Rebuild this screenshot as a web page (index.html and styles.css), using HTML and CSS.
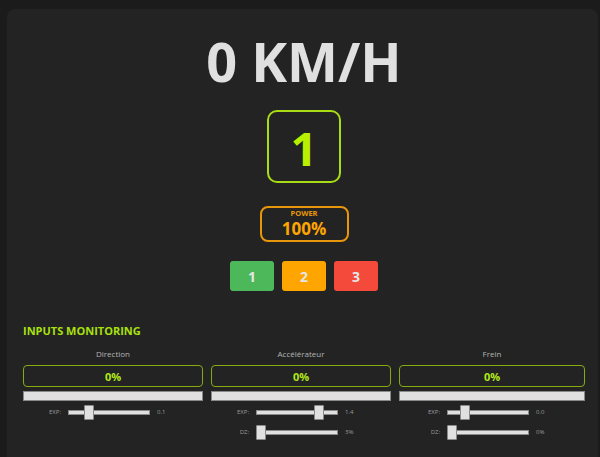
FILE: index.html
```html
<!DOCTYPE html>
<html lang="fr">
<head>
<meta charset="utf-8">
<title>Dashboard</title>
<link rel="stylesheet" href="styles.css">
</head>
<body>
<div class="panel">
  <div class="speed">0 KM/H</div>
  <div class="gear">1</div>
  <div class="power">
    <div class="power-label">POWER</div>
    <div class="power-value">100%</div>
  </div>
  <div class="modes">
    <div class="mode mode-green">1</div>
    <div class="mode mode-orange">2</div>
    <div class="mode mode-red">3</div>
  </div>
  <div class="section-title">INPUTS MONITORING</div>
  <div class="inputs">
    <div class="input">
      <div class="input-name">Direction</div>
      <div class="input-value">0%</div>
      <div class="input-bar"></div>
      <div class="slider-row">
        <span class="s-label">EXP:</span>
        <div class="track"><div class="thumb" style="left:20%"></div></div>
        <span class="s-value">0.1</span>
      </div>
    </div>
    <div class="input">
      <div class="input-name">Accélérateur</div>
      <div class="input-value">0%</div>
      <div class="input-bar"></div>
      <div class="slider-row">
        <span class="s-label">EXP:</span>
        <div class="track"><div class="thumb" style="left:72%"></div></div>
        <span class="s-value">1.4</span>
      </div>
      <div class="slider-row">
        <span class="s-label">DZ:</span>
        <div class="track"><div class="thumb" style="left:0%"></div></div>
        <span class="s-value">3%</span>
      </div>
    </div>
    <div class="input">
      <div class="input-name">Frein</div>
      <div class="input-value">0%</div>
      <div class="input-bar"></div>
      <div class="slider-row">
        <span class="s-label">EXP:</span>
        <div class="track"><div class="thumb" style="left:16%"></div></div>
        <span class="s-value">0.0</span>
      </div>
      <div class="slider-row">
        <span class="s-label">DZ:</span>
        <div class="track"><div class="thumb" style="left:0%"></div></div>
        <span class="s-value">0%</span>
      </div>
    </div>
  </div>
</div>
</body>
</html>
```
FILE: styles.css
```css
html, body {
  margin: 0;
  padding: 0;
  background: #1b1b1b;
  font-family: "Open Sans", "Noto Sans", sans-serif;
  height: 100%;
  overflow: hidden;
}
.panel {
  box-sizing: border-box;
  margin: 9px 2px 0 7px;
  padding: 25px 13px 0 16px;
  height: calc(100vh - 9px);
  background: #232323;
  border-radius: 8px 8px 0 0;
  display: flex;
  flex-direction: column;
  align-items: center;
}
.speed {
  font-size: 54px;
  font-weight: 700;
  line-height: 54px;
  color: #e0e0e0;
}
.gear {
  margin-top: 22px;
  width: 70px;
  height: 66px;
  padding-top: 3px;
  border: 2px solid #a8dc14;
  border-radius: 10px;
  display: flex;
  align-items: center;
  justify-content: center;
  font-size: 47px;
  font-weight: 700;
  color: #b8f000;
  line-height: 1;
}
.power {
  margin-top: 23px;
  width: 85px;
  height: 32px;
  border: 2px solid #e8960c;
  border-radius: 8px;
  display: flex;
  flex-direction: column;
  align-items: center;
  color: #ffa500;
}
.power-label {
  font-size: 7.5px;
  font-weight: 700;
  line-height: 10px;
  margin-top: 0;
  color: #e8960c;
}
.power-value {
  font-size: 17px;
  font-weight: 700;
  line-height: 22px;
}
.modes {
  margin-top: 19px;
  display: flex;
  gap: 8px;
}
.mode {
  width: 44px;
  height: 30px;
  border-radius: 3px;
  display: flex;
  align-items: center;
  justify-content: center;
  font-size: 14px;
  font-weight: 700;
  color: #e6e6e6;
}
.mode-green { background: #4cb85a; }
.mode-orange { background: #ffa500; }
.mode-red { background: #f44a3c; }
.section-title {
  align-self: stretch;
  margin-top: 33px;
  font-size: 11px;
  font-weight: 700;
  line-height: 14px;
  color: #a8e00f;
}
.inputs {
  align-self: stretch;
  margin-top: 10px;
  display: grid;
  grid-template-columns: 180px 180px 1fr;
  gap: 8px;
}
.input {
  display: flex;
  flex-direction: column;
  align-items: center;
}
.input-name {
  font-size: 8px;
  line-height: 12px;
  color: #b4b4b4;
}
.input-value {
  align-self: stretch;
  margin-top: 5px;
  height: 20px;
  border: 1.5px solid #86ac12;
  border-radius: 4px;
  display: flex;
  align-items: center;
  justify-content: center;
  font-size: 11px;
  font-weight: 700;
  color: #b0e81a;
}
.input-bar {
  align-self: stretch;
  margin-top: 4px;
  height: 8px;
  background: #e0e0e0;
  border: 1px solid #8a8a8a;
}
.slider-row {
  margin-top: 3px;
  height: 16px;
  display: flex;
  align-items: center;
}
.slider-row + .slider-row {
  margin-top: 4px;
}
.s-label {
  width: 12px;
  margin-right: 7px;
  text-align: right;
  font-size: 6px;
  color: #9a9a9a;
  white-space: nowrap;
}
.track {
  position: relative;
  width: 80px;
  height: 3px;
  background: #e0e0e0;
  border: 1px solid #8a8a8a;
}
.thumb {
  position: absolute;
  top: -6px;
  width: 8px;
  height: 13px;
  margin-left: -1px;
  background: #e0e0e0;
  border: 1px solid #8a8a8a;
  border-radius: 1px;
}
.s-value {
  width: 20px;
  margin-left: 7px;
  font-size: 6px;
  color: #9a9a9a;
}
```
